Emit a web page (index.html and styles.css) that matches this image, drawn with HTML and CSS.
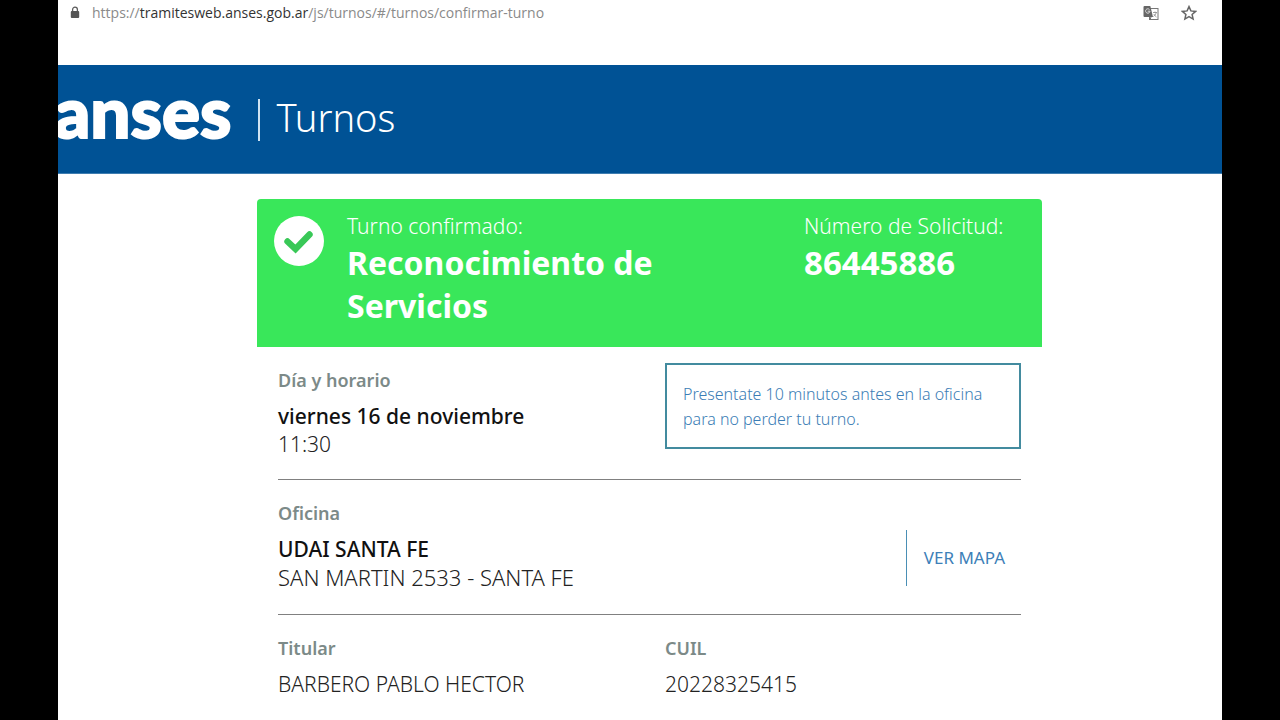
FILE: index.html
```html
<!DOCTYPE html>
<html lang="es">
<head>
<meta charset="utf-8">
<meta name="viewport" content="width=device-width, initial-scale=1">
<title>anses | Turnos</title>
<link rel="stylesheet" href="styles.css">
</head>
<body>
<div class="page">
  <div class="address-bar">
    <svg class="lock" viewBox="0 0 10 13" aria-hidden="true"><path d="M2.6 6V3.6a2.4 2.4 0 0 1 4.8 0V6" fill="none" stroke="#5c5c5c" stroke-width="1.3"/><rect x="0.8" y="5" width="8.4" height="7" rx="1" fill="#555"/></svg>
    <span class="url">https://<span class="url-host">tramitesweb.anses.gob.ar</span>/js/turnos/#/turnos/confirmar-turno</span>
    <button class="icon-button" aria-label="Traducir esta página">
      <svg width="16" height="16" viewBox="0 0 16 16" aria-hidden="true"><rect x="6.500" y="3.500" width="8.500" height="11" fill="#fff" stroke="#777"/><path d="M1.500 1h5.800l2.700 11H1.500a1 1 0 0 1-1-1V2a1 1 0 0 1 1-1z" fill="#666"/><path d="M7 6.200H4.700M6.500 4.600A2.200 2.200 0 1 0 7 6.200" fill="none" stroke="#ddd" stroke-width="1"/><path d="M8 12l-1 2.500" stroke="#666"/><path d="M10 7.500h4M12 6.500v1M13.200 7.500c-.4 2-1.600 3.200-2.800 4M10.800 9c.7 1.500 1.700 2.200 2.700 3" fill="none" stroke="#888" stroke-width=".8"/></svg>
    </button>
    <button class="icon-button" aria-label="Agregar a favoritos">
      <svg width="16" height="16" viewBox="0 0 16 16" aria-hidden="true"><path d="M8 1.600l1.900 4.300 4.700.5-3.500 3.100 1 4.600L8 11.700l-4.100 2.400 1-4.600L1.400 6.400l4.700-.5z" fill="none" stroke="#666" stroke-width="1.500"/></svg>
    </button>
  </div>

  <header class="site-header">
    <span class="logo">anses</span>
    <span class="section-name">Turnos</span>
  </header>

  <main class="ticket">
    <section class="banner">
      <svg class="check" viewBox="0 0 50 50" aria-hidden="true"><circle cx="25" cy="25" r="25" fill="#fff"/><path d="M13.500 25.500l8 7.500L35.500 18.500" fill="none" stroke="#39c857" stroke-width="6.400" stroke-linecap="round" stroke-linejoin="miter"/></svg>
      <div class="banner-service">
        <p class="banner-label">Turno confirmado:</p>
        <h1 class="banner-title">Reconocimiento de Servicios</h1>
      </div>
      <div>
        <p class="banner-label">Número de Solicitud:</p>
        <p class="banner-number">86445886</p>
      </div>
    </section>

    <div class="details">
      <section class="row">
        <div class="field">
          <h2 class="label">Día y horario</h2>
          <p class="value strong">viernes 16 de noviembre</p>
          <p class="value">11:30</p>
        </div>
        <p class="notice">Presentate 10 minutos antes en la oficina para no perder tu turno.</p>
      </section>
      <section class="row">
        <div class="field">
          <h2 class="label">Oficina</h2>
          <p class="value strong">UDAI SANTA FE</p>
          <p class="value address">SAN MARTIN 2533 - SANTA FE</p>
        </div>
        <a class="map-link" href="#mapa">VER MAPA</a>
      </section>
      <section class="row">
        <div class="field">
          <h2 class="label">Titular</h2>
          <p class="value">BARBERO PABLO HECTOR</p>
        </div>
        <div class="field">
          <h2 class="label">CUIL</h2>
          <p class="value">20228325415</p>
        </div>
      </section>
    </div>
  </main>
</div>
</body>
</html>
```
FILE: styles.css
```css
* {
  box-sizing: border-box;
}

body {
  margin: 0;
  background: #000;
  font-family: "Noto Sans", "Open Sans", sans-serif;
  color: #222;
}

h1,
h2,
p {
  margin: 0;
}

.page {
  height: 100vh;
  margin: 0 58px;
  background: #fff;
  overflow: hidden;
}

.address-bar {
  display: flex;
  align-items: center;
  height: 25px;
  padding: 0 25px 0 12px;
  margin-bottom: 40px;
}

.lock {
  width: 10px;
  height: 13px;
  margin-right: 12px;
}

.url {
  flex: 1;
  font-family: "Open Sans", sans-serif;
  font-size: 14px;
  color: #8a8a8a;
}

.url-host {
  color: #333;
}

.icon-button {
  display: flex;
  margin-left: 22px;
  padding: 0;
  border: 0;
  background: none;
}

.site-header {
  display: flex;
  align-items: flex-start;
  height: 109px;
  padding-top: 34px;
  border-bottom: 1px solid #3f7db0;
  background: #005295;
  color: #fff;
}

.logo {
  margin-left: -4px;
  font-family: Lato, sans-serif;
  font-size: 71px;
  font-weight: 900;
  line-height: 24px;
  -webkit-text-stroke: 2px #fff;
}

.section-name {
  margin-left: 26px;
  padding: 0 0 6px 17px;
  border-left: 2px solid #cfe3f2;
  font-size: 38px;
  font-weight: 300;
  line-height: 36px;
}

.ticket {
  margin: 25px 180px 0 199px;
}

.banner {
  display: grid;
  grid-template-columns: 50px 1fr 222px;
  min-height: 148px;
  padding: 13px 16px 0 17px;
  border-radius: 4px 4px 0 0;
  background: #39e75a;
  color: #fff;
}

.banner-service {
  padding: 0 120px 0 23px;
}

.check {
  width: 50px;
  height: 50px;
  margin-top: 4px;
}

.banner-label {
  font-size: 21px;
  font-weight: 300;
  line-height: 29px;
}

.banner-title,
.banner-number {
  font-size: 32px;
  font-weight: 700;
  line-height: 43px;
}

.banner-number {
  font-size: 33px;
}

.details {
  padding: 0 21px;
}

.row {
  display: grid;
  grid-template-columns: 1fr 356px;
  column-gap: 31px;
  min-height: 135px;
  padding-top: 16px;
}

.row:first-child {
  min-height: 132px;
}

.row + .row {
  border-top: 1px solid #808080;
}

.field {
  padding-top: 4px;
}

.label {
  margin-bottom: 9px;
  font-size: 18px;
  font-weight: 600;
  line-height: 26px;
  color: #7c8a88;
}

.value {
  font-size: 21px;
  font-weight: 300;
  line-height: 28px;
}

.address {
  font-size: 22px;
}

.strong {
  font-weight: 500;
  color: #111;
}

.notice {
  align-self: start;
  padding: 17px 16px 15px;
  border: 2px solid #438b9f;
  font-size: 16px;
  font-weight: 300;
  line-height: 25px;
  color: #3b7db5;
}

.map-link {
  justify-self: end;
  align-self: center;
  margin-top: 6px;
  padding: 0 16px 0 17px;
  border-left: 1px solid #4a8fb5;
  font-size: 17px;
  line-height: 56px;
  color: #3d80b8;
  text-decoration: none;
}
```
